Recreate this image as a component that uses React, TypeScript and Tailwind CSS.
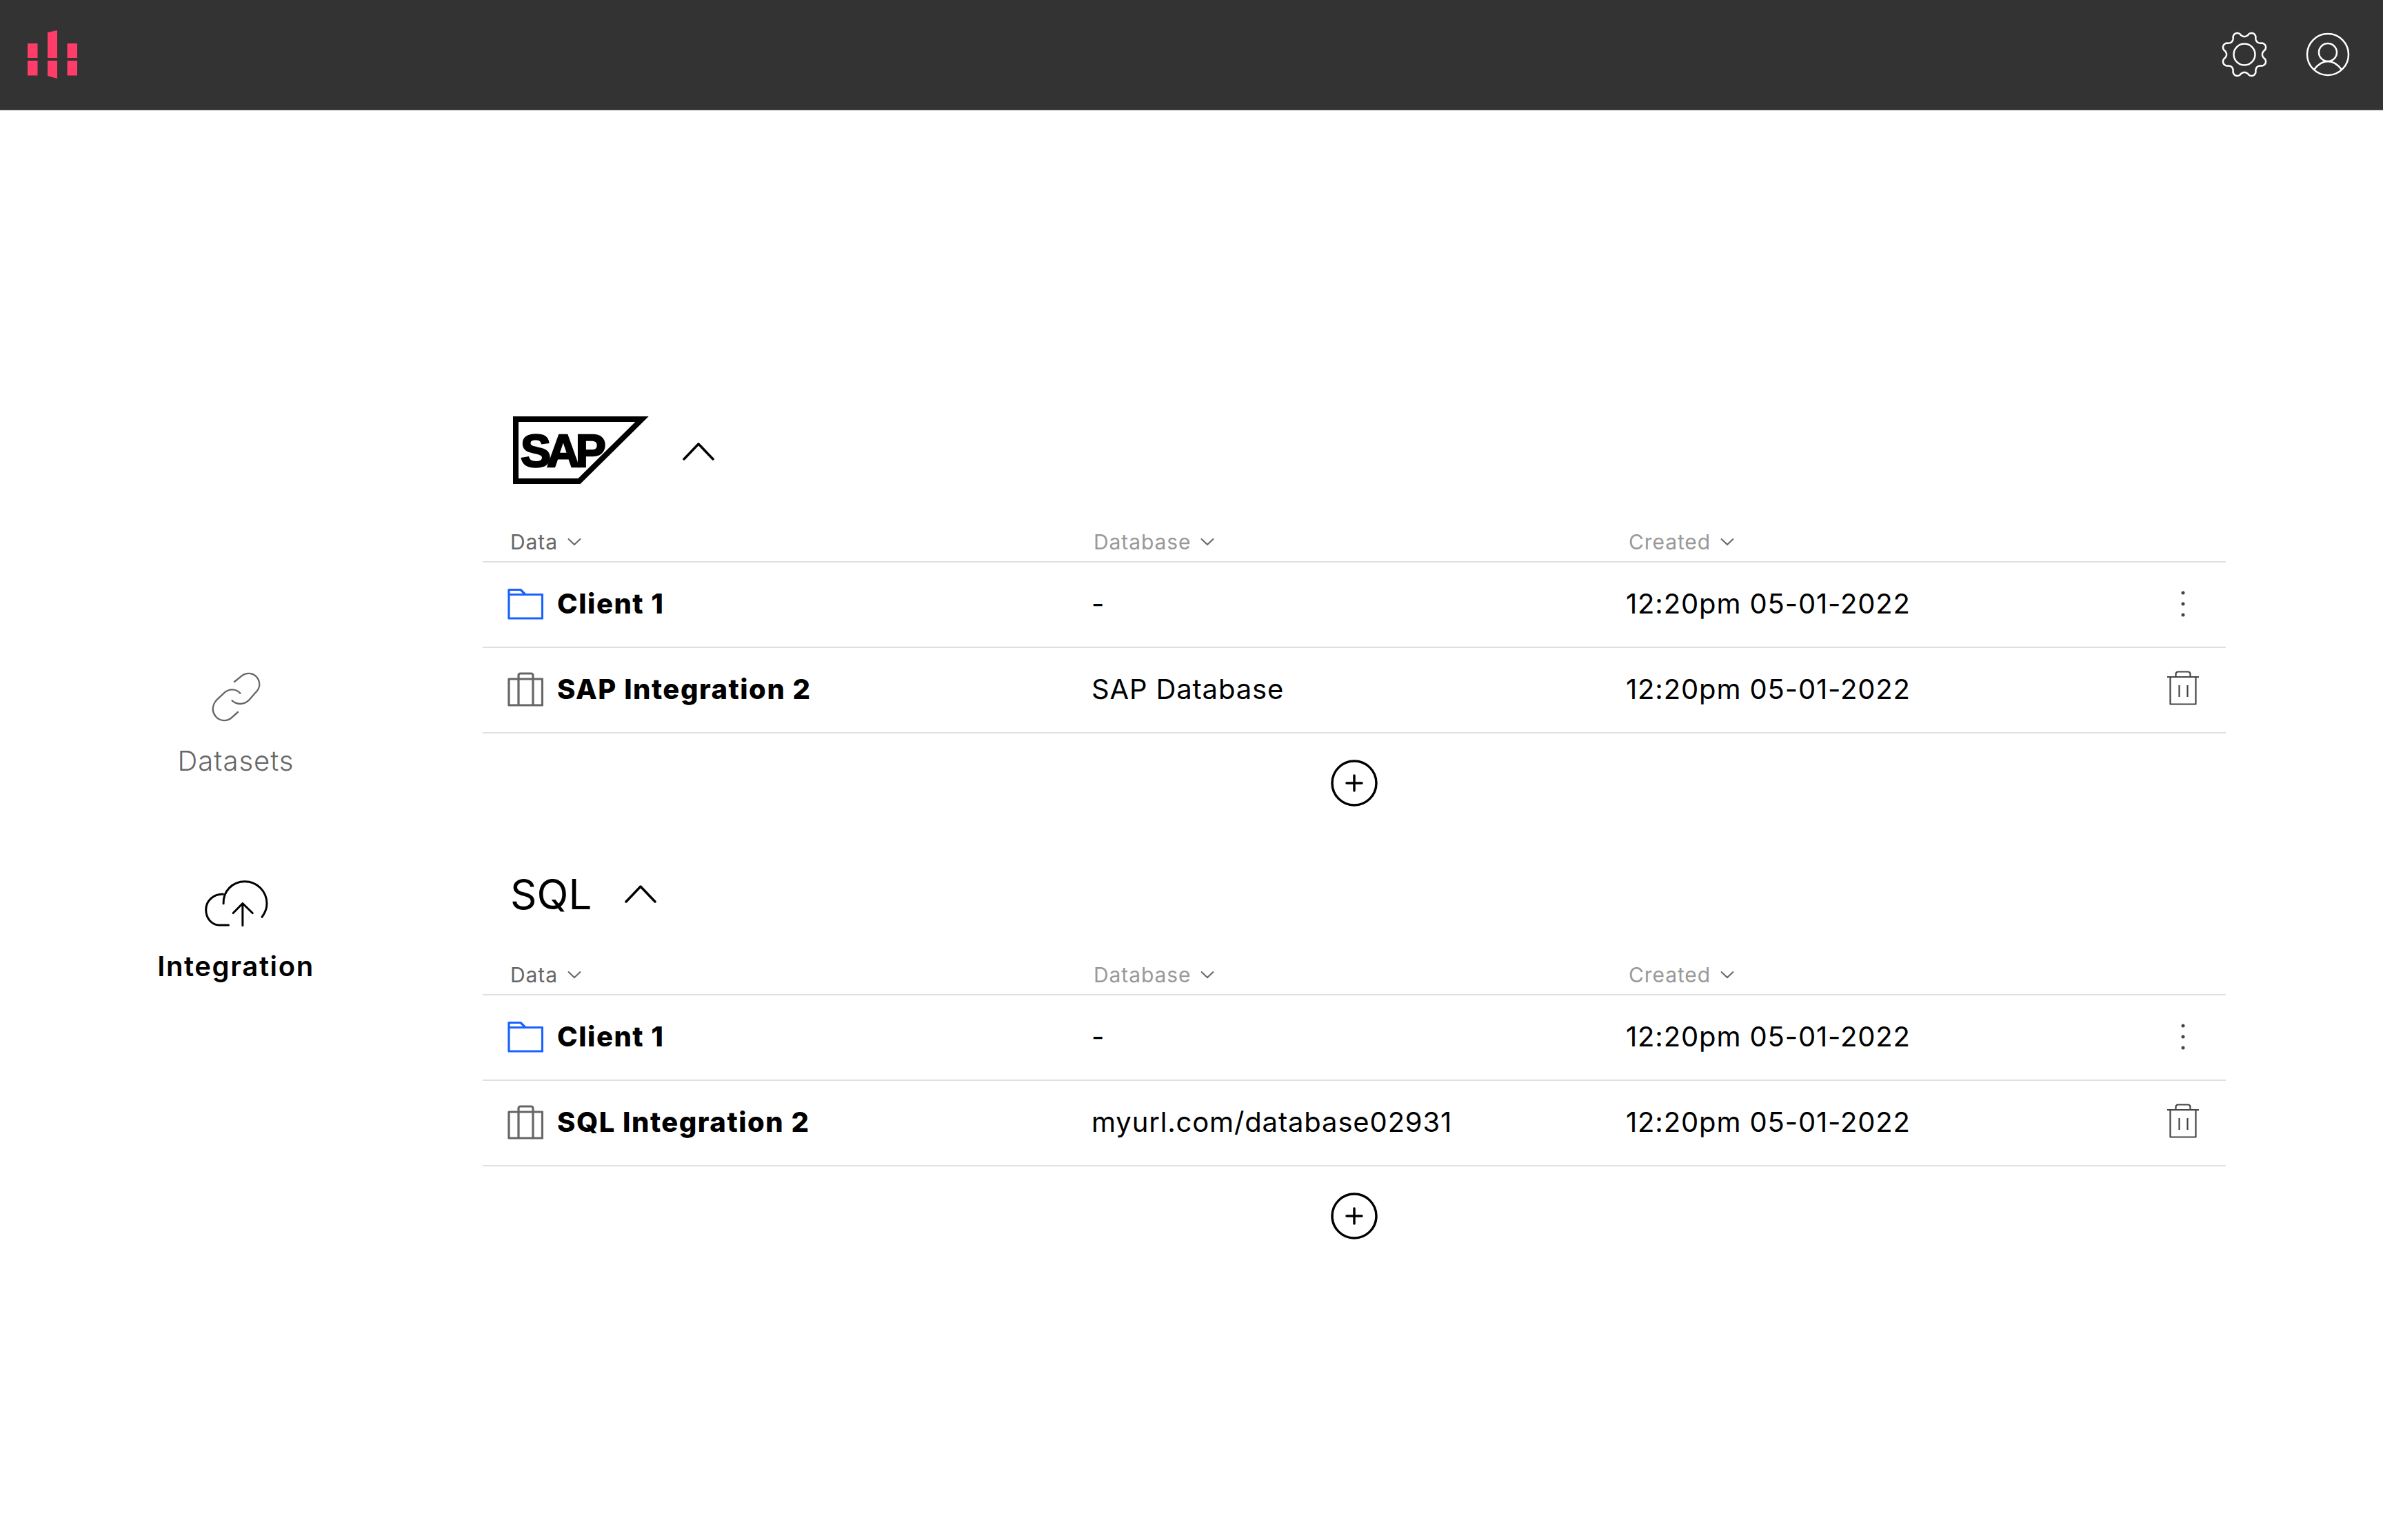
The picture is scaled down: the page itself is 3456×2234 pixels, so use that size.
import React from 'react';

const FONT = "font-['Inter',_'Liberation_Sans',_sans-serif]";

// wavy gear outline, 8 lobes
const gearPath = () => {
  const pts: string[] = [];
  for (let i = 0; i < 240; i++) {
    const t = (i / 240) * Math.PI * 2;
    const c = Math.cos(8 * (t - Math.PI / 8));
    const r = 29.5 + 3.6 * Math.sign(c) * Math.pow(Math.abs(c), 0.7);
    pts.push(`${(34 + r * Math.cos(t)).toFixed(2)} ${(34 + r * Math.sin(t)).toFixed(2)}`);
  }
  return 'M' + pts.join('L') + 'Z';
};

const Logo = () => (
  <svg width="72" height="72" viewBox="0 0 72 72" fill="#ff3d68">
    <rect x="0" y="20" width="14.5" height="21" />
    <rect x="0" y="45" width="14.5" height="21.5" />
    <polygon points="29,4 43,1 43,41 29,41" />
    <polygon points="29,45 43,45 43,71 29,67" />
    <rect x="57.5" y="20" width="14.5" height="21" />
    <rect x="57.5" y="45" width="14.5" height="21.5" />
  </svg>
);

const SapLogo = () => (
  <svg width="200" height="98" viewBox="0 0 200 98" fill="none">
    <path d="M4 4H187L96 94H4Z" stroke="#000" strokeWidth="8" />
    <text
      x="11"
      y="73"
      fontFamily="Liberation Sans"
      fontWeight="700"
      fontSize="66"
      letterSpacing="-6"
      fill="#000"
      stroke="#000"
      strokeWidth="2.5"
    >
      SAP
    </text>
  </svg>
);

const ChevronUp = () => (
  <svg width="46" height="26" viewBox="0 0 46 26" fill="none" stroke="#000" strokeWidth="3.5" strokeLinecap="round" strokeLinejoin="round">
    <path d="M2 24L23 2L44 24" />
  </svg>
);

const SmallChevron = () => (
  <svg width="20" height="12" viewBox="0 0 20 12" fill="none" stroke="#666" strokeWidth="2">
    <path d="M1 1.5L10 10L19 1.5" />
  </svg>
);

const FolderIcon = () => (
  <svg width="52" height="46" viewBox="0 0 52 46" fill="none" stroke="#1a62ff" strokeWidth="3.2" strokeLinejoin="round">
    <path d="M2 2.5H19L26 9.5H50.5V44H2Z M2 9.5H26" />
  </svg>
);

const CaseIcon = () => (
  <svg width="52" height="50" viewBox="0 0 52 50" fill="none" stroke="#666" strokeWidth="3.2" strokeLinejoin="round">
    <path d="M2 10H50.5V48H2Z M16 10V48 M37 10V48 M16 10V5Q16 2 19 2H34Q37 2 37 5V10" />
  </svg>
);

const TrashIcon = () => (
  <svg width="46" height="50" viewBox="0 0 46 50" fill="none" stroke="#444" strokeWidth="2.2" strokeLinejoin="round">
    <path d="M0 9H46 M4.5 9V48.5H41.5V9 M12.5 9V5Q12.5 1.5 16 1.5H30Q33.5 1.5 33.5 5V9 M17.5 21V38 M29.5 21V38" />
  </svg>
);

const DotsIcon = () => (
  <svg width="6" height="38" viewBox="0 0 6 38" fill="#444">
    <circle cx="3" cy="3" r="2.5" />
    <circle cx="3" cy="19" r="2.5" />
    <circle cx="3" cy="35" r="2.5" />
  </svg>
);

const PlusCircle = () => (
  <svg width="68" height="68" viewBox="0 0 68 68" fill="none" stroke="#000" strokeWidth="3.5" strokeLinecap="round">
    <circle cx="34" cy="34" r="32" />
    <path d="M23 34H45 M34 23V45" />
  </svg>
);

const LinkIcon = () => (
  <svg width="75" height="75" viewBox="310 100 225 225" fill="none" stroke="#666" strokeWidth="7" strokeLinecap="round">
    <path d="M415 148L447 122C470 104 503 110 517 135C530 157 523 180 505 197L478 228C455 250 425 248 405 230" />
    <path d="M440 198C420 177 392 178 372 195L340 225C318 247 315 275 332 297C350 322 385 322 405 302L430 280" />
  </svg>
);

const CloudIcon = () => (
  <svg width="97" height="72" viewBox="280 1000 290 215" fill="none" stroke="#000" strokeWidth="9" strokeLinecap="round" strokeLinejoin="round">
    <path d="M392 1200H352C318 1200 294 1170 294 1133C294 1095 325 1066 368 1066" />
    <path d="M370 1107C368 1052 410 1011 462 1011C517 1011 558 1055 558 1107C558 1128 550 1148 537 1165" />
    <path d="M453 1202V1106 M412 1148L453 1106L496 1148" />
  </svg>
);

type RowData = { kind: 'folder' | 'case'; name: string; db: string };

const Row = ({ kind, name, db }: RowData) => (
  <div className="flex h-[124px] items-center border-b-2 border-[#e0e0e0] pb-[2px]">
    <div className="flex w-[883px] items-center pl-[36px]">
      <span className="flex w-[72px]">{kind === 'folder' ? <FolderIcon /> : <CaseIcon />}</span>
      <span className="text-[40px] leading-[48px] font-extrabold tracking-[1.5px] text-black">{name}</span>
    </div>
    <div className="w-[775px] text-[40px] leading-[48px] tracking-[0.85px] text-black">{db}</div>
    <div className="flex-1 text-[40px] leading-[48px] tracking-[0.85px] text-black">12:20pm 05-01-2022</div>
    <div className="flex w-[124px] justify-center">
      {kind === 'folder' ? <DotsIcon /> : <span className="mb-[4px] flex"><TrashIcon /></span>}
    </div>
  </div>
);

const HeaderCell = ({ label, muted, width }: { label: string; muted?: boolean; width: string }) => (
  <div className={`flex items-center gap-[14px] ${width}`}>
    <span className={`text-[30px] leading-[36px] tracking-[0.9px] ${muted ? 'text-[#999999]' : 'text-[#666666]'}`}>{label}</span>
    <SmallChevron />
  </div>
);

const Section = ({ head, rows }: { head: React.ReactNode; rows: RowData[] }) => (
  <section className="mb-[63px]">
    <div className="flex h-[95px] items-center">{head}</div>
    <div className="flex h-[116px] items-end border-b-2 border-[#e0e0e0] pb-[10px] pl-[40px]">
      <HeaderCell label="Data" width="w-[846px]" />
      <HeaderCell label="Database" muted width="w-[776px]" />
      <HeaderCell label="Created" muted width="flex-1" />
    </div>
    {rows.map((r) => (
      <Row key={r.name} {...r} />
    ))}
    <div className="mt-[38px] flex justify-center">
      <PlusCircle />
    </div>
  </section>
);

export default function App() {
  return (
    <div className={`h-[2234px] overflow-hidden bg-white ${FONT}`}>
      <header className="flex h-[160px] items-center justify-between border-b-2 border-[#3d3d3d] bg-[#333333] pl-[40px] pr-[48px]">
        <Logo />
        <div className="flex items-center gap-[55px]">
          <svg width="68" height="68" viewBox="0 0 68 68" fill="none" stroke="#fff" strokeWidth="2.5">
            <path d={gearPath()} strokeLinejoin="round" />
            <circle cx="34" cy="34" r="15.5" />
          </svg>
          <svg width="64" height="64" viewBox="0 0 64 64" fill="none" stroke="#fff" strokeWidth="2.5">
            <circle cx="32" cy="32" r="30" />
            <circle cx="32" cy="29" r="13" />
            <path d="M12 54C18 46 25 42 32 42C39 42 46 46 52 54" />
          </svg>
        </div>
      </header>
      <div className="flex">
        <aside className="flex w-[684px] flex-col items-center pt-[813px]">
          <LinkIcon />
          <span className="mt-[32px] text-[40px] leading-[48px] font-light tracking-[1px] text-[#666666]">Datasets</span>
          <div className="mt-[147px]">
            <CloudIcon />
          </div>
          <span className="mt-[31px] text-[40px] leading-[48px] font-semibold tracking-[1.6px] text-black">Integration</span>
        </aside>
        <main className="ml-[16px] w-[2528px] pt-[445px]">
          <Section
            head={
              <div className="flex items-center gap-[46px] pl-[44px]">
                <SapLogo />
                <span className="mt-[4px] flex"><ChevronUp /></span>
              </div>
            }
            rows={[
              { kind: 'folder', name: 'Client 1', db: '-' },
              { kind: 'case', name: 'SAP Integration 2', db: 'SAP Database' },
            ]}
          />
          <Section
            head={
              <div className="flex items-center gap-[48px] pl-[40px] pt-[32px]">
                <span className="text-[60px] leading-[72px] text-black">SQL</span>
                <ChevronUp />
              </div>
            }
            rows={[
              { kind: 'folder', name: 'Client 1', db: '-' },
              { kind: 'case', name: 'SQL Integration 2', db: 'myurl.com/database02931' },
            ]}
          />
        </main>
      </div>
    </div>
  );
}
